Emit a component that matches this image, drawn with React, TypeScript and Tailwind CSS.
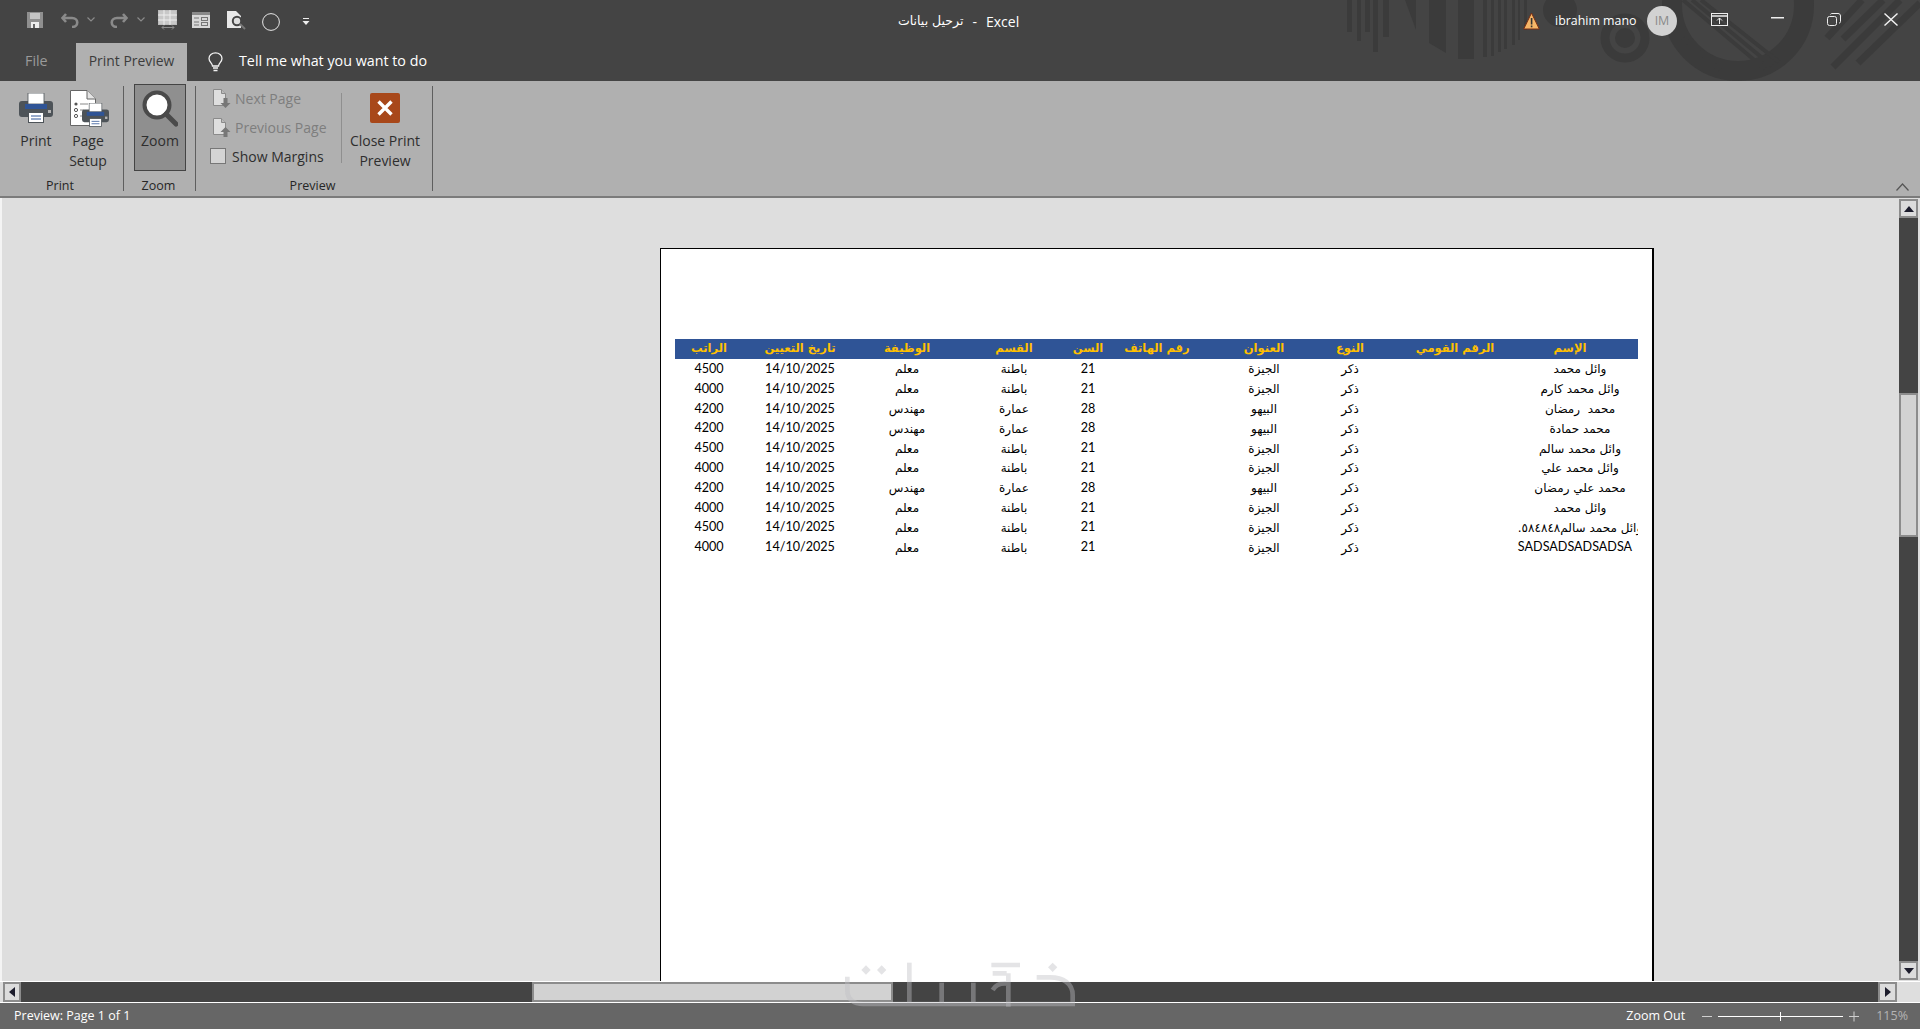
import React from "react";

const rows = [
  ["4500","14/10/2025","معلم","باطنة","21","","الجيزة","ذكر","","وائل محمد"],
  ["4000","14/10/2025","معلم","باطنة","21","","الجيزة","ذكر","","وائل محمد كارم"],
  ["4200","14/10/2025","مهندس","عمارة","28","","البيهو","ذكر","","محمد  رمضان"],
  ["4200","14/10/2025","مهندس","عمارة","28","","البيهو","ذكر","","محمد حمادة"],
  ["4500","14/10/2025","معلم","باطنة","21","","الجيزة","ذكر","","وائل محمد سالم"],
  ["4000","14/10/2025","معلم","باطنة","21","","الجيزة","ذكر","","وائل محمد علي"],
  ["4200","14/10/2025","مهندس","عمارة","28","","البيهو","ذكر","","محمد علي رمضان"],
  ["4000","14/10/2025","معلم","باطنة","21","","الجيزة","ذكر","","وائل محمد"],
  ["4500","14/10/2025","معلم","باطنة","21","","الجيزة","ذكر","","وائل محمد سالم٥٨٤٨٤٨."],
  ["4000","14/10/2025","معلم","باطنة","21","","الجيزة","ذكر","","SADSADSADSADSA"],
];
const head = ["الراتب","تاريخ التعيين","الوظيفة","القسم","السن","رقم الهاتف","العنوان","النوع","الرقم القومي","الإسم"];
const grid = "grid grid-cols-[68px_114px_100px_114px_34px_104px_110px_62px_148px_82px]";

function TitlePattern() {
  const bars: [number, number, number][] = [
    [1347,5,32],[1357,4,41],[1365,5,32],[1373,5,52],[1383,6,37],[1458,16,59],[1483,4,57],[1491,3,56],
    [1498,3,52],[1504,3,49],[1512,3,45],[1518,2,40],[1524,3,30],
  ];
  return (
    <svg className="absolute left-0 top-0" width="1920" height="81" viewBox="0 0 1920 81" fill="#3b3b3b">
      {bars.map(([x, w, h]) => <rect key={x} x={x} y={0} width={w} height={h} />)}
      <polygon points="1405,0 1416,0 1416,30" />
      <polygon points="1429,0 1446,0 1446,53 1429,43" />
      <circle cx="1560" cy="10" r="17" />
      <circle cx="1625" cy="38" r="20" fill="none" stroke="#3b3b3b" strokeWidth="9" />
      <circle cx="1625" cy="38" r="10" />
      <circle cx="1738" cy="5" r="66" fill="none" stroke="#3b3b3b" strokeWidth="20" />
      <g stroke="#3b3b3b" strokeWidth="4" fill="none">
        <path d="M1683 0 L1765 69" /><path d="M1692 0 L1772 66" /><path d="M1701 0 L1779 62" />
        <path d="M1683 38 L1720 70" />
      </g>
      <g stroke="#3b3b3b" strokeWidth="7" fill="none">
        <path d="M1827 38 L1862 0" /><path d="M1843 39 L1883 0" /><path d="M1833 67 L1900 0" /><path d="M1858 63 L1920 3" />
      </g>
    </svg>
  );
}

function Qat() {
  return (
    <div className="relative flex h-[43px] items-start">
      <svg className="ml-[27px] mt-[12px]" width="16" height="16" viewBox="0 0 16 16"><path d="M0 0H16V16H0Z" fill="#8f8f8f" /><rect x="3" y="1" width="10" height="6" fill="#c4c4c4" /><rect x="4" y="10" width="8" height="6" fill="#eee" /><rect x="6" y="12" width="2" height="4" fill="#666" /></svg>
      <svg className="ml-[18px] mt-[13px]" width="19" height="15" viewBox="0 0 19 15" fill="none" stroke="#8a8a8a" strokeWidth="2.6"><path d="M5 1 L1.5 5 L5 9" /><path d="M2 5 H11 C18 5 18 14 11 14" /></svg>
      <svg className="ml-[7px] mt-[17px]" width="8" height="5" viewBox="0 0 8 5" fill="none" stroke="#8a8a8a" strokeWidth="1.2"><path d="M0.5 0.5 L4 4 L7.5 0.5" /></svg>
      <svg className="ml-[14px] mt-[13px]" width="19" height="15" viewBox="0 0 19 15" fill="none" stroke="#8a8a8a" strokeWidth="2.6"><path d="M14 1 L17.5 5 L14 9" /><path d="M17 5 H8 C1 5 1 14 8 14" /></svg>
      <svg className="ml-[9px] mt-[17px]" width="8" height="5" viewBox="0 0 8 5" fill="none" stroke="#8a8a8a" strokeWidth="1.2"><path d="M0.5 0.5 L4 4 L7.5 0.5" /></svg>
      <svg className="ml-[13px] mt-[10px]" width="20" height="20" viewBox="0 0 20 20"><rect x="0.5" y="0.5" width="18" height="14" fill="#c8c8c8" stroke="#bbb" /><path d="M0 5H19M0 10H19M6 0V15M12 0V15" stroke="#eeeeee" /><path d="M4 17.5H16M6 15.5L4 17.5L6 19.5M14 15.5L16 17.5L14 19.5" stroke="#8c8c8c" fill="none" /></svg>
      <svg className="ml-[14px] mt-[12px]" width="18" height="16" viewBox="0 0 18 16"><rect width="18" height="16" fill="#d8d8d8" /><rect width="18" height="3" fill="#8a8a8a" /><path d="M2 6H7M2 10H7M2 13H7" stroke="#777" /><rect x="9.5" y="5.5" width="6" height="3" fill="none" stroke="#777" /><rect x="9.5" y="10.5" width="6" height="3" fill="none" stroke="#777" /></svg>
      <svg className="ml-[17px] mt-[11px]" width="19" height="19" viewBox="0 0 19 19"><path d="M0 0H9L14 5V17H0Z" fill="#e8e8e8" /><circle cx="10" cy="10" r="4.2" fill="#ddd" stroke="#444" strokeWidth="2" /><path d="M13 13L18 18" stroke="#777" strokeWidth="2" /></svg>
      <svg className="ml-[16px] mt-[13px]" width="18" height="18" viewBox="0 0 18 18"><circle cx="9" cy="9" r="8.4" fill="none" stroke="#e6e6e6" strokeWidth="1" /></svg>
      <svg className="ml-[22px] mt-[18px]" width="8" height="7" viewBox="0 0 8 7"><rect x="1" y="0" width="6" height="1" fill="#eee" /><path d="M0.5 3H7.5L4 7Z" fill="#eee" /></svg>
      <div className="absolute left-[898px] top-[10px] flex h-[22px] items-center gap-[9px] whitespace-nowrap text-[14px] text-white">
        <span className="font-['DejaVu_Sans',sans-serif] text-[12.5px]">ترحيل بيانات</span>
        <span>-</span>
        <span>Excel</span>
      </div>
      <svg className="absolute left-[1523px] top-[12px]" width="17" height="18" viewBox="0 0 17 18"><path d="M8.5 1L16.3 17H0.7Z" fill="#f6b668" stroke="#7a2e12" strokeWidth="1" /><rect x="7.8" y="6" width="1.6" height="6.5" fill="#333" /><rect x="7.8" y="13.5" width="1.6" height="1.8" fill="#333" /></svg>
      <span className="absolute left-[1555px] top-[11px] text-[12.4px] leading-[20px] text-white">ibrahim mano</span>
      <div className="absolute left-[1647px] top-[6px] flex h-[30px] w-[30px] items-center justify-center rounded-full bg-[#d2d2d2] text-[12.5px] text-[#8a8a8a]">IM</div>
      <svg className="absolute left-[1711px] top-[13px]" width="17" height="13" viewBox="0 0 17 13" fill="none" stroke="#eee"><rect x="0.5" y="0.5" width="16" height="12" /><path d="M0 3H17" strokeWidth="1.5" /><path d="M8.5 11V5M6 7.5L8.5 5L11 7.5" /></svg>
      <svg className="absolute left-[1771px] top-[17px]" width="13" height="2"><rect width="13" height="1.5" fill="#eee" /></svg>
      <svg className="absolute left-[1827px] top-[13px]" width="14" height="13" viewBox="0 0 14 13" fill="none" stroke="#eee"><rect x="0.5" y="3.5" width="9" height="9" rx="2" /><path d="M3.5 1.5C3.5 1 4 0.5 5 0.5H11C12.5 0.5 13.5 1.5 13.5 3V8.5C13.5 9.5 13 10 12 10" /></svg>
      <svg className="absolute left-[1884px] top-[13px]" width="14" height="13" viewBox="0 0 14 13" stroke="#f4f4f4" strokeWidth="1.4"><path d="M0.5 0.5L13.5 12.5M13.5 0.5L0.5 12.5" /></svg>
    </div>
  );
}

function Tabs() {
  return (
    <div className="relative flex h-[38px] items-stretch text-[14.3px]">
      <div className="ml-[25px] flex w-[51px] items-center pb-[2px] text-[#9a9a9a]">File</div>
      <div className="flex w-[111px] items-center justify-center bg-[#b0b0b0] pb-[2px] text-[13.9px] text-[#3c3c3c]">Print Preview</div>
      <svg className="ml-[21px] mt-[9px]" width="15" height="20" viewBox="0 0 15 20" fill="none" stroke="#f2f2f2" strokeWidth="1.3"><path d="M4.5 14C4.5 11 1 10 1 6.5C1 3.2 3.8 0.8 7.5 0.8S14 3.2 14 6.5C14 10 10.5 11 10.5 14Z" /><path d="M5 16H10M5.5 18.5H9.5" strokeWidth="1.6" /></svg>
      <div className="ml-[16px] flex items-center pb-[2px] text-white">Tell me what you want to do</div>
    </div>
  );
}

const BtnLabel = ({ children }: { children: React.ReactNode }) => (
  <div className="text-center text-[14px] leading-[20px] text-[#2e2e2e]">{children}</div>
);
const GroupLabel = ({ children }: { children: React.ReactNode }) => (
  <div className="flex h-[20px] items-center justify-center text-[12.5px] text-[#262626]">{children}</div>
);
const Sep = () => <div className="my-[5px] w-px bg-[#5f5f5f]" />;

function PrinterIcon({ w, h, cls }: { w: number; h: number; cls?: string }) {
  return (
    <svg className={cls} width={w} height={h} viewBox="0 0 34 30">
      <rect x="0" y="8" width="34" height="16" rx="3" fill="#4d5358" />
      <rect x="9" y="0" width="16" height="11" fill="#fff" stroke="#4d5358" strokeWidth="0.8" />
      <rect x="6" y="11" width="22" height="5" fill="#2f5496" />
      <rect x="29" y="17" width="3" height="3" fill="#b5b5b5" />
      <rect x="9.5" y="19.5" width="15" height="10" fill="#fff" stroke="#4d5358" />
      <path d="M12 23H22M12 26H22" stroke="#2f5496" />
    </svg>
  );
}

function PageIcon({ up }: { up: boolean }) {
  return (
    <svg width="18" height="19" viewBox="0 0 18 19">
      <path d="M0.5 0.5H8.5L12.5 4.5V16.5H0.5Z" fill="#dedede" stroke="#8a8a8a" />
      <path d="M8.5 0.5V4.5H12.5" fill="#bbb" stroke="#8a8a8a" />
      {up
        ? <path d="M12.5 9L17.5 14H14.5V19H10.5V14H7.5Z" fill="#777" />
        : <path d="M12.5 19L17.5 14H14.5V9H10.5V14H7.5Z" fill="#777" />}
    </svg>
  );
}

function Ribbon() {
  return (
    <div className="flex h-[117px] border-b-2 border-[#7b7b7b] bg-[#b0b0b0]">
      <div className="flex w-[123px] flex-col">
        <div className="flex h-[94px] pl-[10px] pt-[7px]">
          <div className="w-[52px]">
            <div className="flex h-[43px] justify-center pt-[5px]"><PrinterIcon w={34} h={30} /></div>
            <BtnLabel>Print</BtnLabel>
          </div>
          <div className="w-[52px]">
            <div className="relative h-[43px]">
              <svg className="absolute left-[8px] top-[2px]" width="26" height="36" viewBox="0 0 26 36">
                <path d="M0.5 0.5H17L25.5 9V35.5H0.5Z" fill="#fff" stroke="#666" />
                <path d="M17 0.5V9H25.5" fill="#e5e5e5" stroke="#666" />
                <circle cx="6" cy="14" r="1.6" fill="#555" /><circle cx="6" cy="20" r="1.6" fill="none" stroke="#555" /><circle cx="6" cy="26" r="1.6" fill="none" stroke="#555" />
                <path d="M10 14H18M10 20H14M10 26H14" stroke="#888" />
              </svg>
              <PrinterIcon w={27} h={24} cls="absolute left-[20px] top-[15px]" />
            </div>
            <BtnLabel>Page<br />Setup</BtnLabel>
          </div>
        </div>
        <GroupLabel><span className="pr-[3px] pt-[2px]">Print</span></GroupLabel>
      </div>
      <Sep />
      <div className="flex w-[71px] flex-col">
        <div className="ml-[10px] mt-[3px] flex h-[87px] w-[52px] flex-col items-center border border-[#444] bg-[#8f8f8f]">
          <svg className="mt-[5px]" width="36" height="37" viewBox="0 0 36 37" fill="none">
            <circle cx="15" cy="15" r="12.5" fill="#fff" stroke="#4a4a4a" strokeWidth="4" />
            <path d="M24 24L34 34" stroke="#4a4a4a" strokeWidth="5" strokeLinecap="round" />
          </svg>
          <div className="mt-[4px]"><BtnLabel>Zoom</BtnLabel></div>
        </div>
        <GroupLabel><span className="pr-[2px] pt-[10px]">Zoom</span></GroupLabel>
      </div>
      <Sep />
      <div className="flex w-[236px] flex-col">
        <div className="flex h-[94px]">
          <div className="w-[145px] pl-[14px] text-[14px]">
            <div className="mt-[7px] flex h-[20px] items-center gap-[4px] pl-[3px] text-[#7e7e7e]"><PageIcon up={false} />Next Page</div>
            <div className="mt-[9px] flex h-[20px] items-center gap-[4px] pl-[3px] text-[#7e7e7e]"><PageIcon up={true} />Previous Page</div>
            <div className="mt-[9px] flex h-[20px] items-center gap-[6px] text-[#2e2e2e]">
              <div className="h-[16px] w-[16px] border border-[#777] bg-[#d4d4d4]" />Show Margins
            </div>
          </div>
          <div className="mt-[12px] h-[70px] w-px bg-[#8f8f8f]" />
          <div className="w-[86px] pt-[7px]">
            <div className="flex h-[43px] justify-center pt-[5px]">
              <div className="flex h-[30px] w-[30px] items-center justify-center rounded-[2px] bg-[#a8481a]">
                <svg width="16" height="16" viewBox="0 0 16 16" stroke="#fff" strokeWidth="3.4"><path d="M1.5 1.5L14.5 14.5M14.5 1.5L1.5 14.5" /></svg>
              </div>
            </div>
            <BtnLabel>Close Print<br />Preview</BtnLabel>
          </div>
        </div>
        <GroupLabel><span className="pr-[3px] pt-[2px]">Preview</span></GroupLabel>
      </div>
      <Sep />
      <div className="relative flex-1">
        <svg className="absolute right-[11px] top-[102px]" width="13" height="8" viewBox="0 0 13 8" fill="none" stroke="#555" strokeWidth="1.2"><path d="M0.5 7.5L6.5 1L12.5 7.5" /></svg>
      </div>
    </div>
  );
}

function nameShift(i: number) {
  if (i === 9) return "ml-[10px]";
  return "ml-[20px]";
}

function PrintedPage() {
  return (
    <div className="ml-[658px] mt-[50px] w-[994px] flex-1 overflow-hidden border-l border-r-2 border-t border-black bg-white">
      <div className="ml-[14px] mt-[90px] w-[963px] overflow-hidden font-['Lato','DejaVu_Sans',sans-serif] text-[12.6px]">
        <div className={`${grid} h-[20px] items-center bg-[#2f5496] font-bold text-[#ffc000]`}>
          {head.map((t) => (
            <div key={t} className="flex justify-center whitespace-nowrap font-['DejaVu_Sans',sans-serif] text-[11.5px]">{t}</div>
          ))}
        </div>
        {rows.map((r, i) => (
          <div key={i} className={`${grid} h-[19.8px] items-center pt-px text-black`}>
            {r.map((c, j) => {
              const arabic = /[\u0600-\u06ff]/.test(c);
              return (
                <div key={j} className="flex justify-center whitespace-pre">
                  <span
                    dir={arabic ? "rtl" : "ltr"}
                    className={`${arabic ? "font-['DejaVu_Sans',sans-serif] text-[12px]" : ""} ${j === 9 ? nameShift(i) : ""}`}
                  >
                    {c}
                  </span>
                </div>
              );
            })}
          </div>
        ))}
      </div>
    </div>
  );
}

const ScrollBtn = ({ children, cls }: { children: React.ReactNode; cls: string }) => (
  <div className={`flex items-center justify-center border-2 border-[#8c8c8c] bg-[#dcdcdc] ${cls}`}>{children}</div>
);

function Watermark() {
  return (
    <svg className="pointer-events-none absolute left-[830px] top-[940px]" width="260" height="89" viewBox="0 0 780 267" fill="none" stroke="#bebec3" strokeOpacity="0.42" strokeWidth="14">
      <path d="M52 110 V150 C52 178 70 192 100 192 H728 V165 C728 130 700 112 660 112 H620" />
      <path d="M238 68 V188" /><path d="M335 128 V188" /><path d="M430 128 V188" />
      <path d="M484 75 H570 M488 100 H530 M535 100 V200 M488 150 C500 130 520 128 540 132" />
      <path d="M108 76 L122 90 L108 104 L94 90Z M155 76 L169 90 L155 104 L141 90Z M668 68 L682 82 L668 96 L654 82Z" fill="#bebec3" fillOpacity="0.42" stroke="none" />
    </svg>
  );
}

export default function App() {
  return (
    <div className="relative flex h-[1029px] w-[1920px] flex-col overflow-hidden bg-white font-['Open_Sans','DejaVu_Sans',sans-serif]">
      <div className="relative h-[81px] bg-[#444444]">
        <TitlePattern />
        <Qat />
        <Tabs />
      </div>
      <Ribbon />
      <div className="flex h-[783px]">
        <div className="flex min-w-0 flex-1 flex-col border-l-2 border-[#f4f4f4] bg-[#dedede]">
          <PrintedPage />
        </div>
        <div className="flex w-[21px] flex-col bg-[#dedede] pb-px pl-0 pr-[2px] pt-px">
          <ScrollBtn cls="h-[19px]"><svg width="10" height="6"><path d="M5 0L10 6H0Z" fill="#1c1c2c" /></svg></ScrollBtn>
          <div className="h-[175px] bg-[#444444]" />
          <div className="h-[144px] border-2 border-[#8c8c8c] bg-[#d2d2d2]" />
          <div className="flex-1 bg-[#444444]" />
          <ScrollBtn cls="h-[19px]"><svg width="10" height="6"><path d="M5 6L10 0H0Z" fill="#1c1c2c" /></svg></ScrollBtn>
        </div>
      </div>
      <div className="mt-px flex h-[20px] bg-[#dedede] pl-[3px]">
        <ScrollBtn cls="w-[18px]"><svg width="6" height="10"><path d="M0 5L6 0V10Z" fill="#1c1c2c" /></svg></ScrollBtn>
        <div className="w-[511px] bg-[#444444]" />
        <div className="w-[361px] border-2 border-[#8c8c8c] bg-[#d2d2d2]" />
        <div className="w-[985px] bg-[#444444]" />
        <ScrollBtn cls="w-[19px]"><svg width="6" height="10"><path d="M6 5L0 0V10Z" fill="#1c1c2c" /></svg></ScrollBtn>
      </div>
      <div className="mt-px flex h-[26px] items-center bg-[#666666] text-[12.5px] text-white">
        <span className="ml-[14px]">Preview: Page 1 of 1</span>
        <span className="ml-auto">Zoom Out</span>
        <svg className="ml-[17px]" width="157" height="11" viewBox="0 0 157 11" stroke="#cfcfcf">
          <path d="M0 5.5H10" />
          <path d="M16 5.5H141" stroke="#fff" />
          <path d="M78.5 1V10" stroke="#fff" />
          <path d="M147 5.5H157M152 0.5V10.5" />
        </svg>
        <span className="ml-[17px] mr-[12px] text-[#b4b4b4]">115%</span>
      </div>
      <Watermark />
    </div>
  );
}
